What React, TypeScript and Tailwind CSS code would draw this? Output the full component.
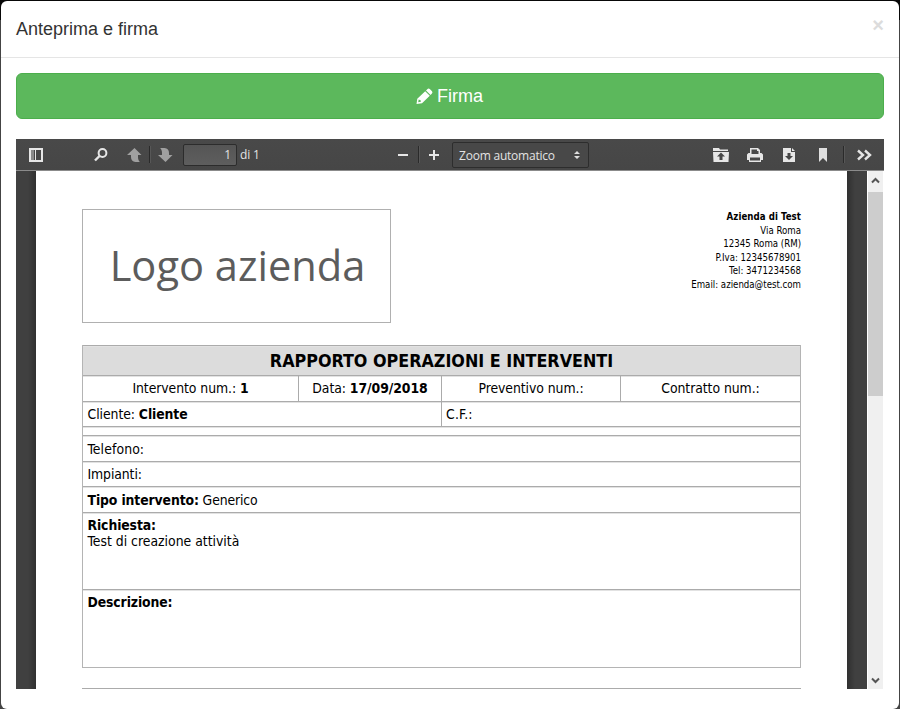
import React from "react";

type CellProps = { children?: React.ReactNode; className?: string };

function Row({ children, className = "" }: CellProps) {
  return <div className={`flex shrink-0 border-t border-[#ababab] shadow-[inset_0_1px_#e2e2e2] ${className}`}>{children}</div>;
}

function Divider() {
  return <div className="h-[17px] w-[2px] border-l border-[#2a2a2a] bg-[#575757]" />;
}

const company = ["Via Roma", "12345 Roma (RM)", "P.Iva: 12345678901", "Tel: 3471234568", "Email: azienda@test.com"];

function Toolbar() {
  return (
    <div className="flex h-8 shrink-0 items-center border-b border-[#8b8b8b] bg-linear-to-b from-[#494949] to-[#464646] font-['Open_Sans','Noto_Sans',sans-serif] text-[12px] text-[#e3e3e3]">
      <svg className="ml-[13px] h-[14px] w-[14px] shrink-0" viewBox="0 0 14 14">
        <path fill="#e6e6e6" fillRule="evenodd" d="M0 0h14v14H0zM2 2v10h10V2z" />
        <path fill="#8a8a8a" d="M2 2h3v10H2z" />
        <path fill="#e6e6e6" d="M6 2h1v10H6z" />
      </svg>
      <svg className="ml-[51px] h-[14px] w-[14px] shrink-0" viewBox="0 0 14 14" fill="none" stroke="#e6e6e6">
        <circle cx="8.5" cy="5" r="3.9" strokeWidth="2" />
        <path d="M5.5 8L1 12.5" strokeWidth="2.4" />
      </svg>
      <svg className="ml-[19px] h-[14px] w-[15px] shrink-0" viewBox="0 0 15 14">
        <path fill="#a0a0a0" d="M7.5 0l7 7H11v2c0 2.5.8 4 2 5H8.5C5.5 13.5 4 12 4 9V7H0z" />
      </svg>
      <div className="ml-[7px]"><Divider /></div>
      <svg className="ml-[7px] h-[14px] w-[15px] shrink-0" viewBox="0 0 15 14">
        <path fill="#a0a0a0" d="M7.5 14l7-7H11V5c0-3-1.500-4.500-4.500-5H2c1.200 1 2 2.500 2 5v2H0z" />
      </svg>
      <div className="ml-[10px] flex h-[22px] w-[54px] items-center justify-end rounded-[2px] border border-[#2c2c2c] bg-linear-to-b from-[#555] to-[#5e5e5e] pt-px pr-[5px]">1</div>
      <div className="ml-[3px] w-[25px] tracking-[-0.2px] whitespace-nowrap">di 1</div>
      <svg className="ml-[132px] h-[12px] w-[12px] shrink-0" viewBox="0 0 12 12">
        <path fill="#e6e6e6" d="M1 5h10v2H1z" />
      </svg>
      <div className="ml-[9px]"><Divider /></div>
      <svg className="ml-[8px] h-[12px] w-[12px] shrink-0" viewBox="0 0 12 12">
        <path fill="#e6e6e6" d="M1 5h4V1h2v4h4v2H7v4H5V7H1z" />
      </svg>
      <div className="ml-[12px] flex h-[26px] w-[137px] items-center justify-between rounded-[2px] border border-[#2d2d2d] bg-[#484848] pr-[8px] pl-[6px]">
        <span className="pt-[2px] tracking-[-0.22px] whitespace-nowrap">Zoom automatico</span>
        <svg className="h-[8px] w-[6px]" viewBox="0 0 6 8">
          <path fill="#e0e0e0" d="M3 0l3 3H0zM3 8L0 5h6z" />
        </svg>
      </div>
      <svg className="ml-[124px] h-[14px] w-[16px] shrink-0" viewBox="0 0 16 14">
        <path fill="#e6e6e6" d="M0 0h6l1 1.500h8V3H0zM0 4h16l-.5 10h-15z" />
        <path fill="#464646" d="M8 4.500l4 4H9.500V12h-3V8.500H4z" />
      </svg>
      <svg className="ml-[18px] h-[14px] w-[16px] shrink-0" viewBox="0 0 16 14">
        <path fill="#e6e6e6" fillRule="evenodd" d="M3 0h8l2 2v3h1.500L16 6.500V12h-2v2H2v-2H0V6.500L1.500 5H3zM4.500 1.500V6h7V3H10V1.500zM3 9.500v3h10v-3z" />
      </svg>
      <svg className="ml-[20px] h-[14px] w-[12px] shrink-0" viewBox="0 0 12 14">
        <path fill="#e6e6e6" d="M0 0h8v4h4v10H0zM9 0l3 3H9z" />
        <path fill="#464646" d="M4.500 5h3v3H10l-4 4-4-4h2.500z" />
      </svg>
      <svg className="ml-[24px] h-[14px] w-[8px] shrink-0" viewBox="0 0 8 14">
        <path fill="#e0e0e0" d="M0 0h8v14L4 10l-4 4z" />
      </svg>
      <div className="ml-[16px]"><Divider /></div>
      <svg className="ml-[12px] h-[12px] w-[15px] shrink-0" viewBox="0 0 15 12" fill="none" stroke="#e6e6e6" strokeWidth="2.400">
        <path d="M1 1.500L6 6l-5 4.500M8 1.500L13 6l-5 4.500" />
      </svg>
    </div>
  );
}

function Report() {
  return (
    <div className="w-[811px] shrink-0 bg-white pr-[46px] pl-[46px] font-['DejaVu_Sans_Condensed','DejaVu_Sans',sans-serif] text-[13.85px] leading-[16px] text-black">
      <div className="flex items-start justify-between pt-[38px]">
        <div className="flex h-[114px] w-[309px] items-center justify-center border border-[#b0b0b0] pb-[3px] pl-[2px] font-['Open_Sans','Noto_Sans',sans-serif] text-[41.6px] whitespace-nowrap text-[#5c5c5c]">
          Logo azienda
        </div>
        <div className="pt-px text-right text-[9.6px] leading-[13.6px] [font-stretch:condensed]">
          <div className="tracking-[0.06px] font-bold">Azienda di Test</div>
          {company.map((line) => <div key={line}>{line}</div>)}
        </div>
      </div>
      <div className="mt-[22px] flex w-[719px] flex-col border-r border-b border-l border-[#b4b4b4] [font-stretch:condensed]">
        <Row className="h-[30px] items-center justify-center bg-[#dcdcdc] text-[17.75px] font-bold">RAPPORTO OPERAZIONI E INTERVENTI</Row>
        <Row className="h-[26px] text-center leading-[24px] tracking-[-0.06px] whitespace-pre">
          <div className="w-[215px]">Intervento num.: <b>1</b></div>
          <div className="w-[143px] border-l border-[#ababab]">Data: <b>17/09/2018</b></div>
          <div className="w-[179px] border-l border-[#ababab]">Preventivo num.:</div>
          <div className="w-[180px] border-l border-[#ababab]">Contratto num.:</div>
        </Row>
        <Row className="h-[25px] leading-[24px] tracking-[-0.06px]">
          <div className="w-[358px] pl-[4.500px]">Cliente: <b className="tracking-[-0.1px]">Cliente</b></div>
          <div className="w-[359px] border-l border-[#ababab] pl-[4px] tracking-[0.2px]">C.F.:</div>
        </Row>
        <Row className="h-[9px]" />
        <Row className="h-[26px] pl-[4.500px] leading-[26px] tracking-[0.1px]">Telefono:</Row>
        <Row className="h-[25px] pl-[4.500px] leading-[24px] tracking-[-0.1px]">Impianti:</Row>
        <Row className="h-[26px] pl-[4.500px] leading-[26px] tracking-[-0.12px] whitespace-pre"><b>Tipo intervento:</b> Generico</Row>
        <Row className="h-[77px] flex-col pt-[4px] pl-[4.500px]">
          <b className="tracking-[-0.12px]">Richiesta:</b>
          <span>Test di creazione attività</span>
        </Row>
        <Row className="h-[78px] pt-[4px] pl-[4.500px] tracking-[-0.12px]"><b>Descrizione:</b></Row>
      </div>
      <div className="mt-[20px] h-px w-[719px] bg-[#ababab]" />
    </div>
  );
}

export default function App() {
  return (
    <div className="h-[709px] w-[900px] overflow-hidden bg-linear-to-b from-[#080808] from-[20px] to-[#444] to-[20px] pt-px pr-px pl-px">
      <div className="flex h-[708px] flex-col rounded-[6px] bg-white font-['Liberation_Sans',Arial,sans-serif]">
        <div className="flex h-[57px] shrink-0 items-center justify-between border-b border-[#e5e5e5] px-[15px]">
          <h4 className="text-[18px] text-[#333]">Anteprima e firma</h4>
          <span className="pb-[9px] text-[20px] leading-none font-bold text-[#dcdcdc]">×</span>
        </div>
        <div className="px-[15px] pt-[15px]">
          <button className="flex h-[46px] w-full items-center justify-center rounded-[6px] border border-[#4cae4c] bg-[#5cb85c] pr-px text-[18px] text-white">
            <svg className="mr-[4px] h-[16px] w-[17px]" viewBox="0 0 17 16">
              <path fill="#fff" fillRule="evenodd" d="M11.300 1.200Q12.500 0 13.800 1.100L16 3.300Q17 4.500 15.900 5.600L14.600 6.900 10 2.400zM9.200 3.200L13.800 7.700 6 15.300.5 16 1.300 10.800zM2.700 11.500L2.200 14.300 4.900 13.800 4.600 12.300z" />
            </svg>
            Firma
          </button>
          <div className="mt-[20px] flex h-[550px] w-[868px] flex-col">
            <Toolbar />
            <div className="flex h-[518px] overflow-hidden">
              <div className="w-[20px] shrink-0 bg-linear-to-r from-[#404040] from-60% to-[#303030]" />
              <Report />
              <div className="w-[20px] shrink-0 bg-linear-to-r from-[#303030] to-[#404040] to-40%" />
              <div className="flex w-[17px] shrink-0 flex-col items-center justify-between border-r border-l border-white bg-[#f0f0f0]">
                <svg className="mt-[6px] h-[7px] w-[9px] shrink-0" viewBox="0 0 9 7" fill="none" stroke="#555" strokeWidth="2">
                  <path d="M1 5.500L4.500 2 8 5.500" />
                </svg>
                <div className="mt-[8px] mb-auto h-[204px] w-[15px] shrink-0 bg-[#cdcdcd]" />
                <svg className="mb-[5px] h-[7px] w-[9px] shrink-0" viewBox="0 0 9 7" fill="none" stroke="#555" strokeWidth="2">
                  <path d="M1 1.500L4.500 5 8 1.500" />
                </svg>
              </div>
            </div>
          </div>
        </div>
      </div>
    </div>
  );
}
